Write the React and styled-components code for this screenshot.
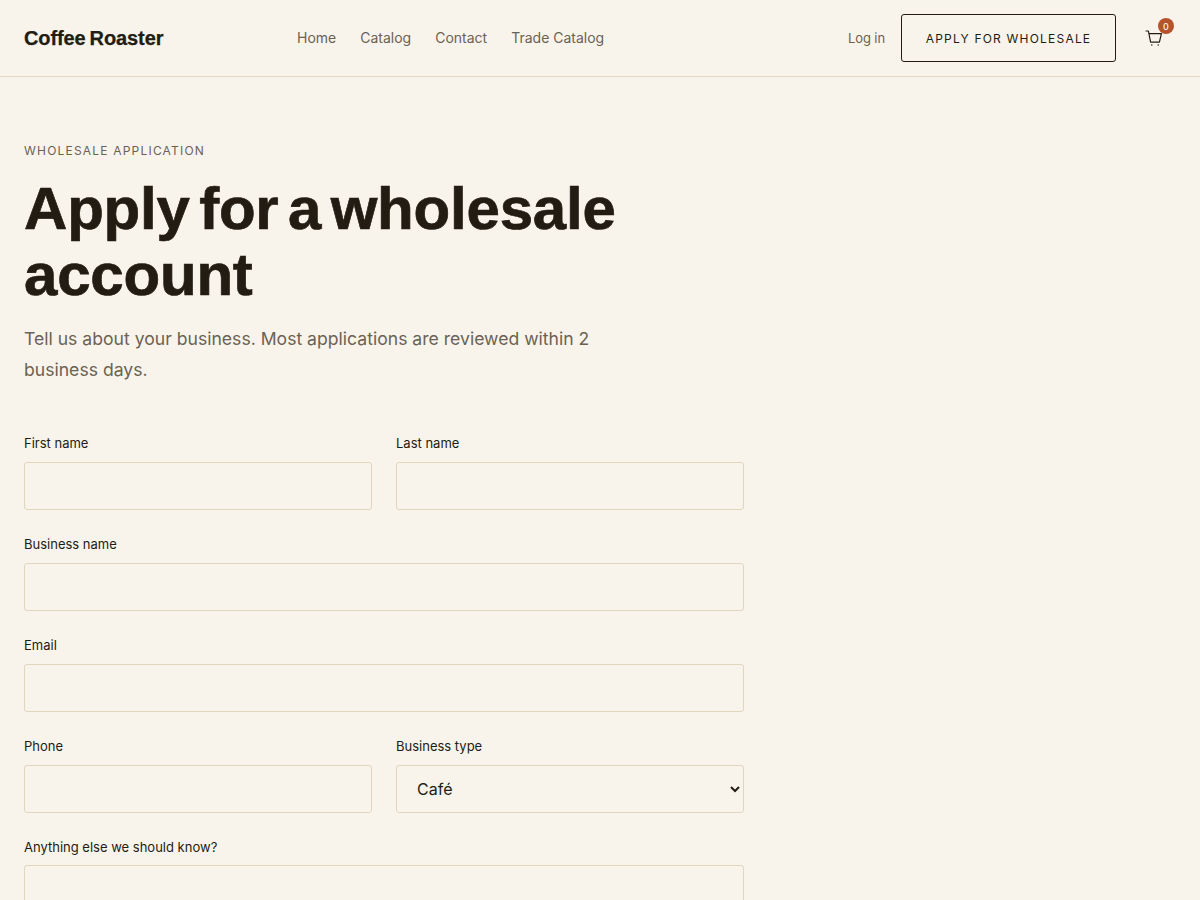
import React from 'react'
import styled, { createGlobalStyle } from 'styled-components'

const Global = createGlobalStyle`
* { box-sizing: border-box; }
html, body { margin: 0; padding: 0; background: #f8f4ec; }
body { font-family: Inter, "Noto Sans", sans-serif; color: #221c12; }
`

const Header = styled.header`
height: 77px;
display: flex;
align-items: center;
padding: 0 24px;
border-bottom: 1px solid #e3d6bd;
`
const Logo = styled.a`
width: 273px;
font-family: "Liberation Sans", Arial, sans-serif;
font-weight: 700;
font-size: 20px;
letter-spacing: -0.1px;
word-spacing: -1.5px;
-webkit-text-stroke: 0.25px #221c12;
color: #221c12;
`
const Nav = styled.nav`
display: flex;
gap: 24px;
flex: 1;
padding-bottom: 1px;
`
const NavLink = styled.a`
font-size: 14px;
color: #6b6254;
`
const Actions = styled.div`
display: flex;
align-items: center;
`
const Login = styled.a`
font-size: 13px;
letter-spacing: -0.1px;
color: #6b6254;
margin-right: 16px;
`
const ApplyButton = styled.button`
height: 48px;
width: 215px;
background: transparent;
border: 1px solid #221c12;
border-radius: 3px;
font-family: inherit;
font-size: 12px;
letter-spacing: 1.2px;
color: #221c12;
`
const CartWrap = styled.div`
position: relative;
display: flex;
margin-left: 29px;
margin-right: 13px;
color: #221c12;
`
const Badge = styled.span`
position: absolute;
top: -11px;
right: -11px;
width: 16px;
height: 16px;
border-radius: 50%;
background: #b5532d;
color: #f8f4ec;
font-size: 9px;
font-weight: 500;
display: flex;
align-items: center;
justify-content: center;
`
const Main = styled.main`
width: 768px;
padding: 64px 24px 64px;
`
const Eyebrow = styled.div`
font-size: 12px;
line-height: 20px;
letter-spacing: 1.2px;
color: #6b6254;
text-transform: uppercase;
`
const Title = styled.h1`
margin: 15px 0 0;
font-family: "Liberation Sans", Arial, sans-serif;
font-weight: 700;
font-size: 60px;
line-height: 66px;
letter-spacing: -0.2px;
word-spacing: -7px;
-webkit-text-stroke: 0.7px #221c12;
color: #221c12;
`
const Lead = styled.p`
margin: 15px 0 0;
width: 600px;
font-size: 17.6px;
line-height: 31px;
color: #6b6254;
`
const Form = styled.form`
margin-top: 48px;
display: grid;
grid-template-columns: 1fr 1fr;
gap: 24px;
`
const Field = styled.label`
display: flex;
flex-direction: column;
gap: 8px;
grid-column: ${(p) => (p.$wide ? '1 / -1' : 'auto')};
`
const LabelText = styled.span`
font-size: 13px;
line-height: 21px;
color: #221c12;
`
const Input = styled.input`
height: 48px;
padding: 0 20px;
background: transparent;
border: 1px solid #e0d5bd;
border-radius: 3px;
font-family: inherit;
font-size: 16px;
`
const Select = styled.select`
height: 48px;
padding: 0 16px;
background: transparent;
border: 1px solid #e0d5bd;
border-radius: 3px;
font-family: inherit;
font-size: 16px;
color: #221c12;
`
const Textarea = styled.textarea`
height: 120px;
margin-top: -1px;
padding: 12px 20px;
background: transparent;
border: 1px solid #e0d5bd;
border-radius: 3px;
font-family: inherit;
font-size: 16px;
resize: vertical;
`

const CartIcon = () => (
    <svg width="18" height="18" viewBox="0 0 18 18" fill="none" stroke="currentColor" strokeWidth="1.2" strokeLinejoin="round" strokeLinecap="round">
        <path d="M1 2h2.4l2.2 11.2h8.8L16.4 4.6H3.9" />
        <circle cx="6.8" cy="16" r="0.75" fill="currentColor" stroke="none" />
        <circle cx="13.2" cy="16" r="0.75" fill="currentColor" stroke="none" />
    </svg>
)

const App = () => {
    return (
        <>
            <Global />
            <Header>
                <Logo>Coffee Roaster</Logo>
                <Nav>
                    <NavLink>Home</NavLink>
                    <NavLink>Catalog</NavLink>
                    <NavLink>Contact</NavLink>
                    <NavLink>Trade Catalog</NavLink>
                </Nav>
                <Actions>
                    <Login>Log in</Login>
                    <ApplyButton>APPLY FOR WHOLESALE</ApplyButton>
                    <CartWrap>
                        <CartIcon />
                        <Badge>0</Badge>
                    </CartWrap>
                </Actions>
            </Header>
            <Main>
                <Eyebrow>Wholesale application</Eyebrow>
                <Title>Apply for a wholesale account</Title>
                <Lead>Tell us about your business. Most applications are reviewed within 2 business days.</Lead>
                <Form>
                    <Field>
                        <LabelText>First name</LabelText>
                        <Input />
                    </Field>
                    <Field>
                        <LabelText>Last name</LabelText>
                        <Input />
                    </Field>
                    <Field $wide>
                        <LabelText>Business name</LabelText>
                        <Input />
                    </Field>
                    <Field $wide>
                        <LabelText>Email</LabelText>
                        <Input type="email" />
                    </Field>
                    <Field>
                        <LabelText>Phone</LabelText>
                        <Input />
                    </Field>
                    <Field>
                        <LabelText>Business type</LabelText>
                        <Select defaultValue="cafe">
                            <option value="cafe">Café</option>
                            <option value="restaurant">Restaurant</option>
                            <option value="retail">Retail</option>
                        </Select>
                    </Field>
                    <Field $wide>
                        <LabelText>Anything else we should know?</LabelText>
                        <Textarea />
                    </Field>
                </Form>
            </Main>
        </>
    )
}

export default App
